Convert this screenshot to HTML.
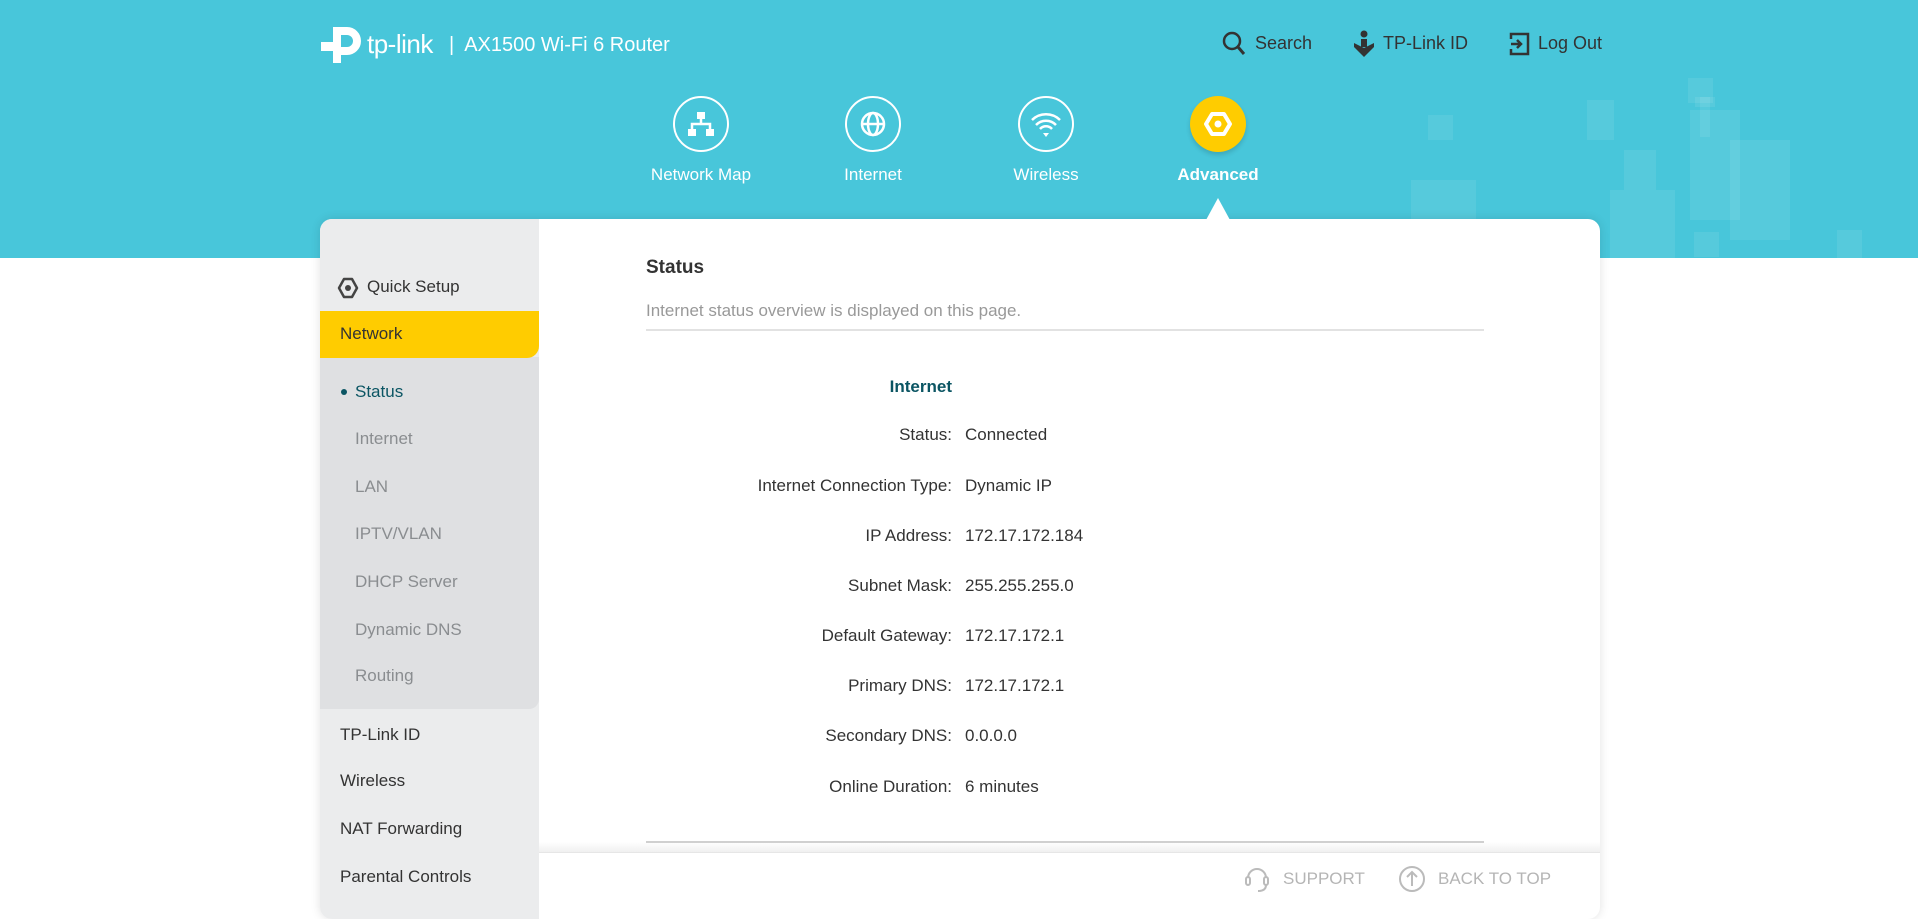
<!DOCTYPE html>
<html><head><meta charset="utf-8">
<style>
*{margin:0;padding:0;box-sizing:border-box}
body{width:1918px;height:897px;overflow:hidden;background:#fff;font-family:"Liberation Sans",sans-serif;position:relative;color:#333}
.hdr{position:absolute;left:0;top:0;width:1918px;height:258px;background:#48c6da;overflow:hidden}
.sq{position:absolute;background:rgba(255,255,255,0.08)}
.abs{position:absolute;white-space:nowrap}
.card{position:absolute;left:320px;top:219px;width:1280px;height:700px;background:#fff;border-radius:12px;box-shadow:0 0 10px rgba(0,0,0,0.12);overflow:hidden}
.side{position:absolute;left:0;top:0;width:219px;height:700px;background:#ebeced}
.sub{position:absolute;left:0;top:138px;width:219px;height:352px;background:#dfe0e2;border-radius:0 0 10px 0}
.net{position:absolute;left:0;top:92px;width:219px;height:47px;background:#ffcc00;border-radius:0 0 12px 0}
.si{position:absolute;font-size:17px;color:#333;white-space:nowrap}
.sg{position:absolute;left:35px;font-size:17px;color:#8a8d90;white-space:nowrap}
.nav{position:absolute;width:56px;height:56px;border-radius:50%;border:2px solid #fff}
.nl{position:absolute;width:200px;text-align:center;color:#fff;font-size:17px}
.lab{position:absolute;right:648px;font-size:17px;color:#333;text-align:right;white-space:nowrap}
.val{position:absolute;left:645px;font-size:17px;color:#333;white-space:nowrap}
</style></head><body>
<div class="hdr">
 <div class="sq" style="left:1587px;top:100px;width:27px;height:40px"></div>
 <div class="sq" style="left:1695px;top:97px;width:20px;height:10px"></div>
 <div class="sq" style="left:1700px;top:97px;width:10px;height:40px"></div>
 <div class="sq" style="left:1610px;top:190px;width:65px;height:68px"></div>
 <div class="sq" style="left:1411px;top:180px;width:65px;height:68px"></div>
 <div class="sq" style="left:1624px;top:150px;width:32px;height:40px"></div>
 <div class="sq" style="left:1730px;top:140px;width:60px;height:100px"></div>
 <div class="sq" style="left:1690px;top:110px;width:50px;height:110px"></div>
 <div class="sq" style="left:1694px;top:232px;width:25px;height:25px"></div>
 <div class="sq" style="left:1688px;top:78px;width:25px;height:25px"></div>
 <div class="sq" style="left:1428px;top:115px;width:25px;height:25px"></div>
 <div class="sq" style="left:1837px;top:230px;width:25px;height:28px"></div>
</div>
<svg class="abs" style="left:319px;top:21px" width="44" height="44" viewBox="0 0 44 44">
 <path d="M14 10 H28 a10 10 0 0 1 0 20 H22" fill="none" stroke="#fff" stroke-width="8"/>
 <rect x="14" y="6" width="8" height="36" fill="#fff"/>
 <rect x="2" y="21" width="12" height="9" fill="#fff"/>
</svg>
<div class="abs" style="left:367px;top:29px;font-size:26px;color:#fff;letter-spacing:-0.5px">tp-link</div>
<div class="abs" style="left:449px;top:34px;font-size:20px;color:#fff">|&nbsp; AX1500 Wi-Fi 6 Router</div>

<svg class="abs" style="left:1222px;top:31px" width="24" height="26" viewBox="0 0 24 26"><circle cx="10" cy="10" r="8" fill="none" stroke="#333" stroke-width="2.5"/><path d="M16 16 L22 23" stroke="#333" stroke-width="3"/></svg>
<div class="abs" style="left:1255px;top:33px;font-size:18px;color:#333">Search</div>
<svg class="abs" style="left:1352px;top:29px" width="24" height="30" viewBox="0 0 24 30"><circle cx="12" cy="5" r="3.5" fill="#333"/><path d="M2 14 L12 19 L22 14 L22 18 L12 28 L2 18Z" fill="#333"/><rect x="9" y="10" width="6" height="8" fill="#333"/></svg>
<div class="abs" style="left:1383px;top:33px;font-size:18px;color:#333">TP-Link ID</div>
<svg class="abs" style="left:1507px;top:31px" width="24" height="26" viewBox="0 0 24 26"><path d="M4 8 V3 H21 V23 H4 V18" fill="none" stroke="#333" stroke-width="2.5"/><path d="M4 13 H14 M10 9 L14 13 L10 17" fill="none" stroke="#333" stroke-width="2.5"/></svg>
<div class="abs" style="left:1538px;top:33px;font-size:18px;color:#333">Log Out</div>

<div class="nav" style="left:673px;top:96px"><svg width="52" height="52" viewBox="0 0 52 52"><rect x="22" y="14" width="8" height="7" fill="#fff"/><path d="M26 21V26 M17 32V26H35V32" fill="none" stroke="#fff" stroke-width="2.5"/><rect x="13" y="31" width="8" height="7" fill="#fff"/><rect x="31" y="31" width="8" height="7" fill="#fff"/></svg></div>
<div class="nl" style="left:601px;top:165px">Network Map</div>
<div class="nav" style="left:845px;top:96px"><svg width="52" height="52" viewBox="0 0 52 52"><circle cx="26" cy="26" r="11" fill="none" stroke="#fff" stroke-width="2.5"/><ellipse cx="26" cy="26" rx="5" ry="11" fill="none" stroke="#fff" stroke-width="2.5"/><path d="M15 26H37" stroke="#fff" stroke-width="2.5"/></svg></div>
<div class="nl" style="left:773px;top:165px">Internet</div>
<div class="nav" style="left:1018px;top:96px"><svg width="52" height="52" viewBox="0 0 52 52"><path d="M12 22 A20 20 0 0 1 40 22 M16 27 A14 14 0 0 1 36 27 M20 31 A8 8 0 0 1 32 31" fill="none" stroke="#fff" stroke-width="2.5"/><path d="M23 35 H29 L26 39Z" fill="#fff"/></svg></div>
<div class="nl" style="left:946px;top:165px">Wireless</div>
<div class="abs" style="left:1190px;top:96px;width:56px;height:56px;border-radius:50%;background:#ffcc00;box-shadow:0 3px 5px rgba(0,0,0,0.15)"><svg width="56" height="56" viewBox="0 0 56 56"><path d="M22 18 H34 L40 28 L34 38 H22 L16 28Z" fill="none" stroke="#fff" stroke-width="4" stroke-linejoin="round"/><circle cx="28" cy="28" r="3.5" fill="#fff"/></svg></div>
<div class="nl" style="left:1118px;top:165px;font-weight:bold">Advanced</div>
<div class="abs" style="left:1206px;top:198px;width:0;height:0;border-left:12px solid transparent;border-right:12px solid transparent;border-bottom:22px solid #fff;z-index:3"></div>

<div class="card">
 <div class="side">
  <div class="sub"></div>
  <div class="net"></div>
  <svg class="abs" style="left:16px;top:57px" width="24" height="24" viewBox="0 0 24 24"><path d="M8 3 H16 L21 12 L16 21 H8 L3 12Z" fill="none" stroke="#444" stroke-width="2.5" stroke-linejoin="round"/><circle cx="12" cy="12" r="3" fill="#444"/></svg>
  <div class="si" style="left:47px;top:58px">Quick Setup</div>
  <div class="si" style="left:20px;top:105px">Network</div>
  <div class="abs" style="left:21px;top:170px;width:6px;height:6px;border-radius:50%;background:#0b5563"></div>
  <div class="si" style="left:35px;top:163px;color:#0b5563">Status</div>
  <div class="sg" style="top:210px">Internet</div>
  <div class="sg" style="top:258px">LAN</div>
  <div class="sg" style="top:305px">IPTV/VLAN</div>
  <div class="sg" style="top:353px">DHCP Server</div>
  <div class="sg" style="top:401px">Dynamic DNS</div>
  <div class="sg" style="top:447px">Routing</div>
  <div class="si" style="left:20px;top:506px">TP-Link ID</div>
  <div class="si" style="left:20px;top:552px">Wireless</div>
  <div class="si" style="left:20px;top:600px">NAT Forwarding</div>
  <div class="si" style="left:20px;top:648px">Parental Controls</div>
 </div>
 <div class="abs" style="left:326px;top:38px;font-size:19px;font-weight:bold;color:#333">Status</div>
 <div class="abs" style="left:326px;top:82px;font-size:17px;color:#999">Internet status overview is displayed on this page.</div>
 <div class="abs" style="left:326px;top:110px;width:838px;height:2px;background:#e2e2e2"></div>
 <div class="lab" style="top:158px;font-weight:bold;color:#0b5563">Internet</div>
 <div class="lab" style="top:206px">Status:</div><div class="val" style="top:206px">Connected</div>
 <div class="lab" style="top:257px">Internet Connection Type:</div><div class="val" style="top:257px">Dynamic IP</div>
 <div class="lab" style="top:307px">IP Address:</div><div class="val" style="top:307px">172.17.172.184</div>
 <div class="lab" style="top:357px">Subnet Mask:</div><div class="val" style="top:357px">255.255.255.0</div>
 <div class="lab" style="top:407px">Default Gateway:</div><div class="val" style="top:407px">172.17.172.1</div>
 <div class="lab" style="top:457px">Primary DNS:</div><div class="val" style="top:457px">172.17.172.1</div>
 <div class="lab" style="top:507px">Secondary DNS:</div><div class="val" style="top:507px">0.0.0.0</div>
 <div class="lab" style="top:558px">Online Duration:</div><div class="val" style="top:558px">6 minutes</div>
 <div class="abs" style="left:219px;top:623px;width:1061px;height:10px;background:linear-gradient(#fff,#f0f0f0)"></div>
 <div class="abs" style="left:326px;top:622px;width:838px;height:2px;background:#d0d0d0"></div>
 <div class="abs" style="left:219px;top:633px;width:1061px;height:1px;background:#e6e6e6"></div>
 <svg class="abs" style="left:923px;top:645px" width="28" height="30" viewBox="0 0 28 30"><path d="M5 14 A9 9 0 0 1 23 14" fill="none" stroke="#bbb" stroke-width="2"/><rect x="3" y="13" width="4" height="8" rx="2" fill="none" stroke="#bbb" stroke-width="2"/><rect x="21" y="13" width="4" height="8" rx="2" fill="none" stroke="#bbb" stroke-width="2"/><path d="M23 21 Q23 27 15 27" fill="none" stroke="#bbb" stroke-width="2"/></svg>
 <div class="abs" style="left:963px;top:650px;font-size:17px;color:#b5b5b5">SUPPORT</div>
 <svg class="abs" style="left:1078px;top:645px" width="28" height="30" viewBox="0 0 28 30"><circle cx="14" cy="15" r="12" fill="none" stroke="#bbb" stroke-width="2"/><path d="M14 22V9 M9 13 L14 8 L19 13" fill="none" stroke="#bbb" stroke-width="2"/></svg>
 <div class="abs" style="left:1118px;top:650px;font-size:17px;color:#b5b5b5">BACK TO TOP</div>
</div>
</body></html>
